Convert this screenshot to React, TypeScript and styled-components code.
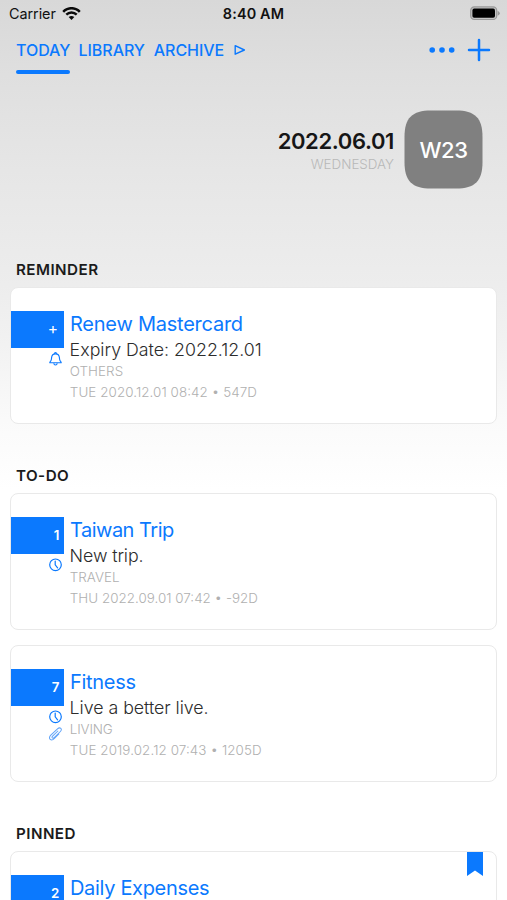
import React from "react";
import styled, { createGlobalStyle } from "styled-components";

const BLUE = "#0b79fe";

const GlobalStyle = createGlobalStyle`
  * { box-sizing: border-box; }
  html, body { margin: 0; padding: 0; background: #fff; }
  body { font-family: Inter, "Liberation Sans", sans-serif; overflow: hidden; }
`;

const Screen = styled.main`
  width: 507px;
  height: 900px;
  overflow: hidden;
  background: linear-gradient(
    180deg,
    #d8d8d8 0px,
    #dfdfdf 75px,
    #e6e6e6 170px,
    #ededed 285px,
    #f1f1f1 335px,
    #fafafa 420px,
    #ffffff 490px
  );
`;

const StatusBar = styled.header`
  display: grid;
  grid-template-columns: 1fr auto 1fr;
  align-items: center;
  height: 28px;
  padding: 0 7px 0 9px;
  color: #111;
`;

const Carrier = styled.div`
  display: flex;
  align-items: center;
  gap: 6px;
  font-size: 14.4px;
  line-height: 28px;
  letter-spacing: -0.05px;
`;

const Clock = styled.div`
  margin-left: -2px;
  font-size: 14.4px;
  line-height: 28px;
  font-weight: 600;
  letter-spacing: 0.15px;
`;

const BatterySlot = styled.div`
  display: flex;
  justify-content: flex-end;
  padding-bottom: 2px;
`;

const NavBar = styled.nav`
  display: flex;
  align-items: flex-start;
  height: 60px;
  padding: 8px 16px 0;
`;

const Tab = styled.button<{ $active?: boolean; $width: number }>`
  display: flex;
  flex-direction: column;
  gap: 6px;
  width: ${(p) => p.$width}px;
  margin-right: 8px;
  padding: 0;
  border: 0;
  background: none;
  color: ${BLUE};
  font: 500 16px/28px Inter, sans-serif;
  letter-spacing: -0.05px;
  white-space: nowrap;
  &::after {
    content: "";
    width: 100%;
    height: 4px;
    border-radius: 2px;
    background: ${(p) => (p.$active ? BLUE : "transparent")};
  }
`;

const PlayIcon = styled.svg`
  margin: 8px 0 0 1px;
`;

const NavActions = styled.div`
  display: flex;
  align-items: center;
  gap: 12px;
  height: 28px;
  margin-left: auto;
`;

const Hero = styled.section`
  display: flex;
  justify-content: flex-end;
  align-items: center;
  gap: 10px;
  height: 123px;
  padding-right: 24px;
`;

const DateBlock = styled.div`
  display: flex;
  flex-direction: column;
  align-items: flex-end;
  padding-top: 3px;
`;

const DateText = styled.div`
  color: #161616;
  font-size: 22px;
  font-weight: 600;
  line-height: 26px;
  letter-spacing: -0.38px;
`;

const Weekday = styled.div`
  color: #b8b8b8;
  font-size: 13.4px;
  font-weight: 300;
  line-height: 20px;
`;

const WeekBadge = styled.div`
  display: grid;
  place-items: center;
  width: 79px;
  height: 79px;
  color: #fff;
  font-size: 22px;
  font-weight: 500;
  letter-spacing: -0.4px;
`;

const BadgeShape = styled.svg`
  grid-area: 1 / 1;
`;

const BadgeLabel = styled.span`
  grid-area: 1 / 1;
  z-index: 1;
`;

const Sections = styled.div`
  padding-top: 49px;
`;

const Section = styled.section<{ $height: number }>`
  display: flex;
  flex-direction: column;
  height: ${(p) => p.$height}px;
  padding: 0 10px;
`;

const Heading = styled.h2`
  margin: 0 0 7px 6px;
  color: #1b1b1b;
  font-size: 15.2px;
  font-weight: 600;
  line-height: 20px;
  letter-spacing: 0.45px;
`;

const CardList = styled.div`
  display: flex;
  flex-direction: column;
  gap: 15px;
`;

const CardBox = styled.article`
  display: flex;
  position: relative;
  flex: none;
  height: 137px;
  padding-top: 23px;
  border: 1px solid #e9e9e9;
  border-radius: 8px;
  background: #fff;
`;

const Side = styled.div`
  display: flex;
  flex-direction: column;
  align-items: flex-end;
  width: 53px;
`;

const CountTile = styled.div<{ $symbol: boolean }>`
  width: 53.4px;
  margin-right: -0.4px;
  height: 37px;
  padding-right: ${(p) => (p.$symbol ? 6.5 : 5)}px;
  background: ${BLUE};
  color: #fff;
  font-size: ${(p) => (p.$symbol ? 15.5 : 13.3)}px;
  font-weight: ${(p) => (p.$symbol ? 400 : 600)};
  line-height: ${(p) => (p.$symbol ? 36 : 37)}px;
  text-align: right;
`;

const SideIcons = styled.div`
  display: flex;
  flex-direction: column;
  gap: 3px;
  padding: 4px 1.7px 0 0;
`;

const Details = styled.div`
  display: flex;
  flex-direction: column;
  padding-left: 6px;
  white-space: nowrap;
`;

const Title = styled.h3<{ $spacing: number }>`
  margin: 0;
  color: ${BLUE};
  font-size: 20px;
  font-weight: 400;
  line-height: 26px;
  letter-spacing: ${(p) => p.$spacing}px;
`;

const Summary = styled.p<{ $spacing: number }>`
  margin: 0 0 -1px -0.4px;
  color: #2c2c2c;
  font-size: 17.8px;
  font-weight: 300;
  line-height: 25px;
  letter-spacing: ${(p) => p.$spacing}px;
`;

const Meta = styled.div<{ $spacing: number }>`
  margin-left: -0.2px;
  color: #b0b0b0;
  font-size: 13.4px;
  font-weight: 300;
  font-feature-settings: "case";
  line-height: 21px;
  letter-spacing: ${(p) => p.$spacing}px;
`;

const Ribbon = styled.svg`
  position: absolute;
  top: 0;
  right: 13px;
`;

const WifiIcon = () => (
  <svg width="19" height="14" viewBox="0 0 19 14" fill="none" stroke="#090909">
    <path d="M1.2 4.8C5.8 0 13.2 0 17.8 4.8" strokeWidth="2.5" />
    <path d="M4.3 7.7C7.2 4.8 11.8 4.8 14.7 7.7" strokeWidth="2.4" />
    <path d="M9.5 13 6.7 10.1Q9.5 7.7 12.3 10.1Z" fill="#090909" stroke="none" />
  </svg>
);

const BatteryIcon = () => (
  <svg width="30" height="15" viewBox="0 0 30 15">
    <rect x=".7" y=".9" width="26" height="12.6" rx="3.6" fill="#c4c4c4" stroke="#999" strokeWidth="1.2" />
    <rect x="2.4" y="2.6" width="22.6" height="9.2" rx="1.8" fill="#000" />
    <path d="M27.6 4.8v5q2.2-1 2.2-2.5T27.6 4.8Z" fill="#999" />
  </svg>
);

const BellIcon = () => (
  <svg width="13" height="14" viewBox="0 0 13 14" fill="none" stroke={BLUE} strokeWidth="1.15" strokeLinejoin="round">
    <path d="M.8 10.7Q.8 10.1 1.5 9.4C2.6 8.2 2.4 7.6 2.6 5.5 2.8 3.3 4.1 1.8 6.5 1.8S10.2 3.3 10.4 5.5C10.6 7.6 10.4 8.2 11.5 9.4Q12.2 10.1 12.2 10.7Z" />
    <path d="M5.3 1.9Q5.5.6 6.5.6T7.7 1.9M4.8 11.2Q5 13 6.5 13T8.2 11.2" />
  </svg>
);

const ClockIcon = () => (
  <svg width="13" height="14" viewBox="0 0 13 14" fill="none" stroke={BLUE} strokeWidth="1.2" strokeLinecap="round">
    <circle cx="6.5" cy="6.8" r="5.8" />
    <path d="M6.2 3V6.9L8.6 9.8" />
  </svg>
);

const ClipIcon = () => (
  <svg width="13" height="14" viewBox="0 0 13 14" fill="none" stroke="#62a4f8" strokeWidth="1.05" strokeLinecap="round">
    <path d="M9.9 7 5.4 11.5C3.9 13 2.3 13.3 1.2 12.3S.3 9.6 1.8 8.1L8.5 1.9C9.7.8 11 .7 11.8 1.4S12.5 3.4 11.4 4.5L5.2 10.7C4.5 11.4 3.8 11.5 3.3 11S2.9 9.9 3.6 9.2L8.9 4" />
  </svg>
);

type IconName = "bell" | "clock" | "clip";
const icons: Record<IconName, React.FC> = { bell: BellIcon, clock: ClockIcon, clip: ClipIcon };

interface Entry {
  count: string;
  title: string;
  summary: string;
  category: string;
  date: string;
  icons: IconName[];
  pinned?: boolean;
  spacing: [number, number, number, number];
}

const Card = ({ entry }: { entry: Entry }) => (
  <CardBox>
    <Side>
      <CountTile $symbol={entry.count === "+"}>{entry.count}</CountTile>
      <SideIcons>
        {entry.icons.map((name) => {
          const Icon = icons[name];
          return <Icon key={name} />;
        })}
      </SideIcons>
    </Side>
    <Details>
      <Title $spacing={entry.spacing[0]}>{entry.title}</Title>
      <Summary $spacing={entry.spacing[1]}>{entry.summary}</Summary>
      <Meta $spacing={entry.spacing[2]}>{entry.category}</Meta>
      <Meta $spacing={entry.spacing[3]}>{entry.date}</Meta>
    </Details>
    {entry.pinned && (
      <Ribbon width="16" height="25" viewBox="0 0 16 25">
        <path d="M0 0H16V24L8 18.5 0 24Z" fill={BLUE} />
      </Ribbon>
    )}
  </CardBox>
);

const sections: { name: string; height: number; entries: Entry[] }[] = [
  {
    name: "REMINDER",
    height: 206,
    entries: [
      {
        count: "+",
        title: "Renew Mastercard",
        summary: "Expiry Date: 2022.12.01",
        category: "OTHERS",
        date: "TUE 2020.12.01 08:42 • 547D",
        icons: ["bell"],
        spacing: [-0.24, 0, 0.05, 0.08],
      },
    ],
  },
  {
    name: "TO-DO",
    height: 358,
    entries: [
      {
        count: "1",
        title: "Taiwan Trip",
        summary: "New trip.",
        category: "TRAVEL",
        date: "THU 2022.09.01 07:42 • -92D",
        icons: ["clock"],
        spacing: [-0.5, -0.1, 0, 0.02],
      },
      {
        count: "7",
        title: "Fitness",
        summary: "Live a better live.",
        category: "LIVING",
        date: "TUE 2019.02.12 07:43 • 1205D",
        icons: ["clock", "clip"],
        spacing: [-0.3, -0.04, -0.15, 0.1],
      },
    ],
  },
  {
    name: "PINNED",
    height: 206,
    entries: [
      {
        count: "2",
        title: "Daily Expenses",
        summary: "",
        category: "",
        date: "",
        icons: [],
        pinned: true,
        spacing: [-0.32, 0, 0, 0],
      },
    ],
  },
];

export default function App() {
  return (
    <>
      <GlobalStyle />
      <Screen>
        <StatusBar>
          <Carrier>
            Carrier
            <WifiIcon />
          </Carrier>
          <Clock>8:40 AM</Clock>
          <BatterySlot>
            <BatteryIcon />
          </BatterySlot>
        </StatusBar>
        <NavBar>
          <Tab $active $width={54}>TODAY</Tab>
          <Tab $width={67.5}>LIBRARY</Tab>
          <Tab $width={71}>ARCHIVE</Tab>
          <PlayIcon width="12" height="12" viewBox="0 0 12 12" fill="none" stroke={BLUE} strokeWidth="1.4" strokeLinejoin="round">
            <path d="M1.2 1.6 10.4 6 1.2 10.2Z" />
          </PlayIcon>
          <NavActions>
            <svg width="26" height="6" viewBox="0 0 26 6" fill={BLUE}>
              <circle cx="3.2" cy="3" r="2.8" />
              <circle cx="13" cy="3" r="2.8" />
              <circle cx="22.7" cy="3" r="2.8" />
            </svg>
            <svg width="24" height="24" viewBox="0 0 24 24" fill="none" stroke={BLUE} strokeWidth="2.5" strokeLinecap="round">
              <path d="M12 2V22M2 12H22" />
            </svg>
          </NavActions>
        </NavBar>
        <Hero>
          <DateBlock>
            <DateText>2022.06.01</DateText>
            <Weekday>WEDNESDAY</Weekday>
          </DateBlock>
          <WeekBadge>
            <BadgeShape width="79" height="79" viewBox="0 0 79 79">
              <path d="M.5 27C.5 8 8 .5 27 .5H52C71 .5 78.5 8 78.5 27V52C78.5 71 71 78.5 52 78.5H27C8 78.5 .5 71 .5 52Z" fill="#808080" />
            </BadgeShape>
            <BadgeLabel>W23</BadgeLabel>
          </WeekBadge>
        </Hero>
        <Sections>
          {sections.map((section) => (
            <Section key={section.name} $height={section.height}>
              <Heading>{section.name}</Heading>
              <CardList>
                {section.entries.map((entry) => (
                  <Card key={entry.title} entry={entry} />
                ))}
              </CardList>
            </Section>
          ))}
        </Sections>
      </Screen>
    </>
  );
}
